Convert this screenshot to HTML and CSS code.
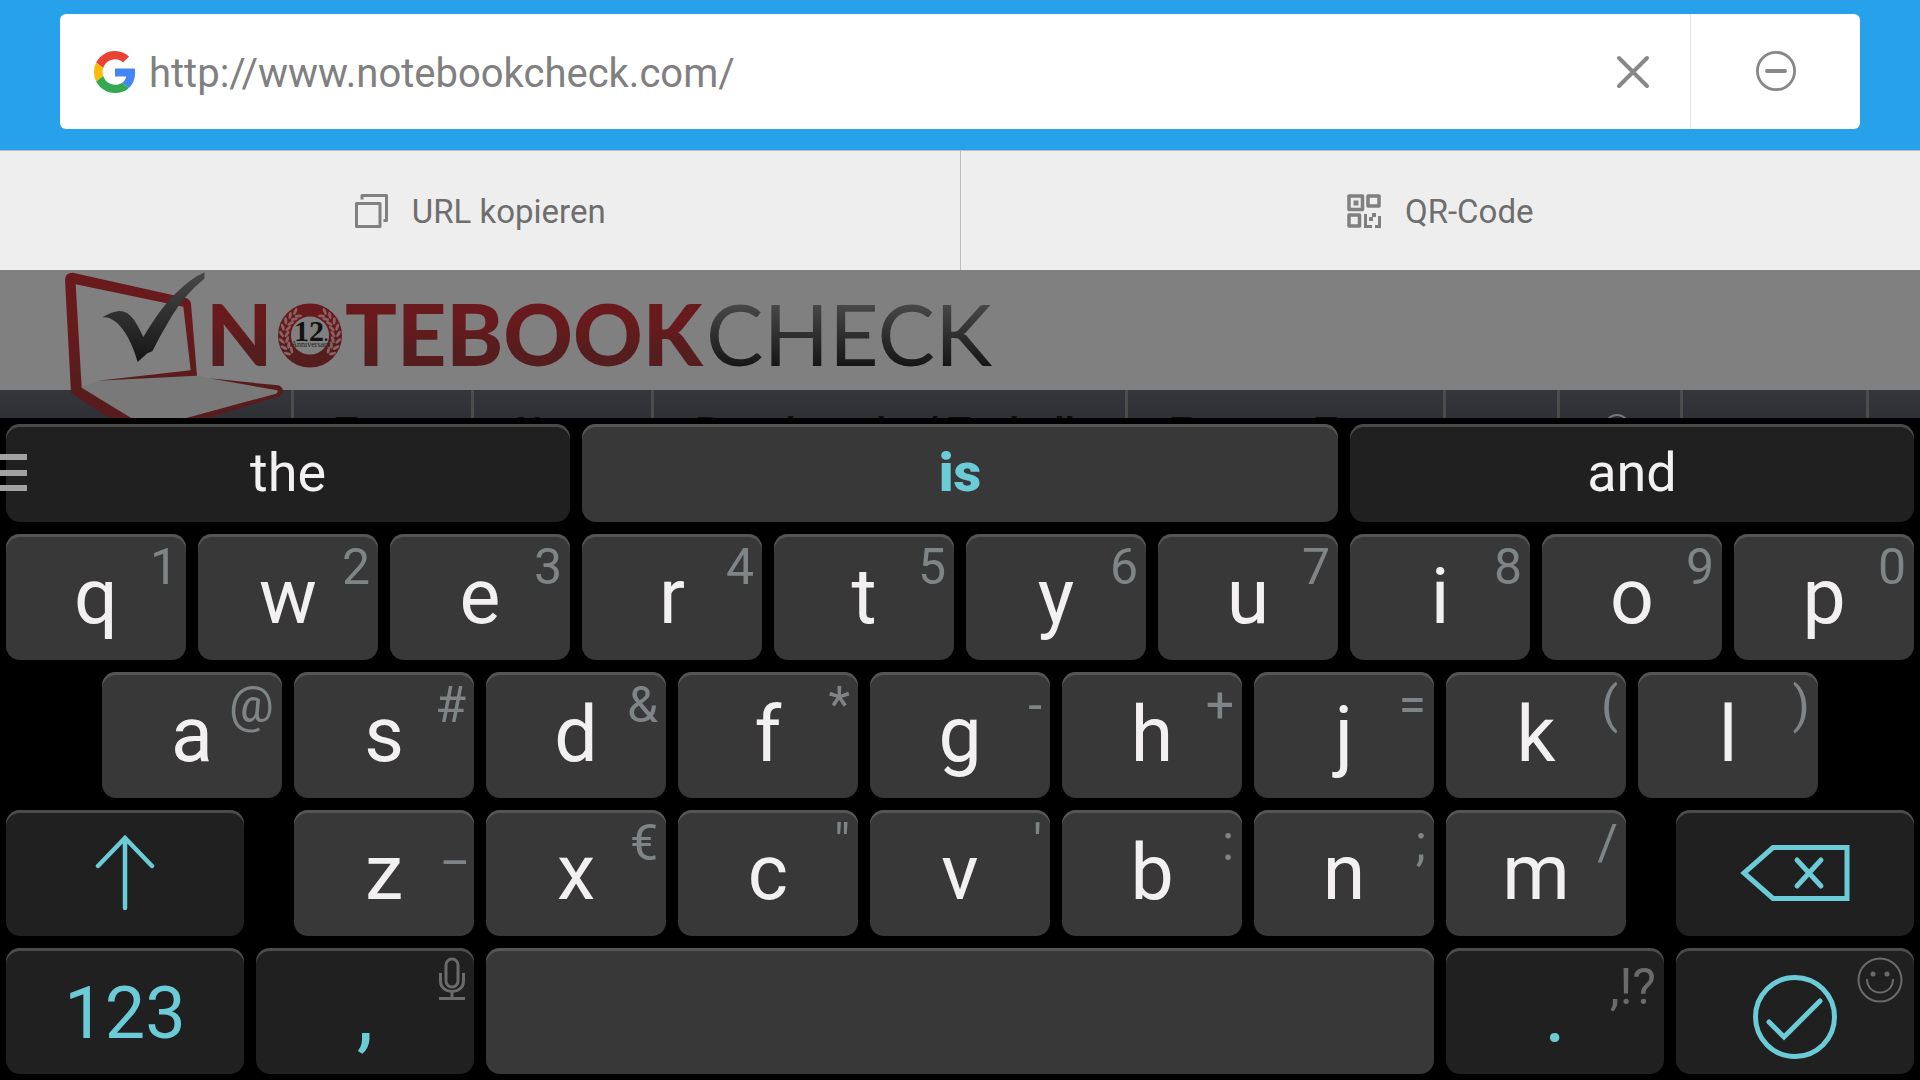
FILE: index.html
```html
<!DOCTYPE html>
<html lang="de">
<head>
<meta charset="utf-8">
<meta name="viewport" content="width=device-width, initial-scale=1">
<title>Notebookcheck</title>
<link rel="stylesheet" href="styles.css">
</head>
<body>
<header class="address">
  <form class="address-box">
    <svg class="google" viewBox="0 0 48 48" aria-hidden="true">
      <path fill="#ea4335" d="M24 9.5c3.54 0 6.71 1.22 9.21 3.6l6.85-6.85C35.9 2.38 30.47 0 24 0 14.62 0 6.51 5.38 2.56 13.22l7.98 6.19C12.43 13.72 17.74 9.5 24 9.5z"/>
      <path fill="#4285f4" d="M46.98 24.55c0-1.57-.15-3.09-.38-4.55H24v9.02h12.94c-.58 2.96-2.26 5.48-4.78 7.18l7.73 6c4.51-4.18 7.09-10.36 7.09-17.65z"/>
      <path fill="#fbbc05" d="M10.53 28.59c-.48-1.45-.76-2.99-.76-4.59s.27-3.14.76-4.59l-7.98-6.19C.92 16.46 0 20.12 0 24c0 3.88.92 7.54 2.56 10.78l7.97-6.19z"/>
      <path fill="#34a853" d="M24 48c6.48 0 11.93-2.13 15.89-5.81l-7.73-6c-2.15 1.45-4.92 2.3-8.16 2.3-6.26 0-11.57-4.22-13.47-9.91l-7.98 6.19C6.51 42.62 14.62 48 24 48z"/>
    </svg>
    <input class="url" type="text" aria-label="Adresse" value="http://www.notebookcheck.com/">
    <button class="clear" type="button" aria-label="Löschen">
      <svg width="36" height="36" viewBox="0 0 36 36"><path d="M4 4 32 32M32 4 4 32" fill="none" stroke="#888" stroke-width="4" stroke-linecap="round"/></svg>
    </button>
    <button class="stop" type="button" aria-label="Entfernen">
      <svg width="40" height="40" viewBox="0 0 40 40" fill="none" stroke="#888"><circle cx="20" cy="20" r="18.6" stroke-width="2.8"/><path d="M11 20H29" stroke-width="4" stroke-linecap="round"/></svg>
    </button>
  </form>
</header>

<div class="actions">
  <button class="action" type="button">
    <svg width="34" height="34" viewBox="0 0 34 34" fill="none" stroke="#808080" stroke-width="3" stroke-linejoin="round"><path d="M2.500 9.500H26V32.500H2.500Z"/><path d="M8 5.500V1.500H32.500V26.500H29.500"/></svg>
    <span>URL kopieren</span>
  </button>
  <button class="action" type="button">
    <svg width="34" height="34" viewBox="0 0 34 34" fill="none" stroke="#808080" stroke-width="3.500" stroke-linejoin="round"><path d="M2 2H15.500V15.500H2ZM21 2H32V12H21ZM2 21H12.500V32H2Z"/><path fill="#808080" stroke="none" d="M6.500 6.500h5v5h-5zM17 20h3v11h5v3h-8zM25 19h4v4h-3v4h-4v-4h3zM31 22h3v12h-6v-3h3z"/></svg>
    <span>QR-Code</span>
  </button>
</div>

<main class="site">
  <div class="masthead"></div>
  <nav class="menu">
    <span></span>
    <a href="#tests">Tests</a>
    <a href="#news">News</a>
    <a href="#technik">Benchmarks / Technik</a>
    <a href="#extern">Externe Tests</a>
    <span></span>
    <a class="menu-search" href="#suche" aria-label="Suche"><svg width="36" height="36" viewBox="0 0 36 36" fill="none" stroke="#77787a" stroke-width="2"><circle cx="16" cy="14" r="12"/><path d="M24 23l9 10"/></svg></a>
    <span></span>
  </nav>
  <svg class="logo" width="960" height="148" viewBox="60 270 960 148" role="img" aria-label="Notebookcheck">
    <defs>
      <linearGradient id="red" gradientUnits="userSpaceOnUse" x1="0" y1="305" x2="0" y2="367"><stop offset="0.300" stop-color="#681a1c"/><stop offset="0.750" stop-color="#551d1e"/></linearGradient>
      <linearGradient id="dark" gradientUnits="userSpaceOnUse" x1="0" y1="305" x2="0" y2="367"><stop offset="0" stop-color="#474747"/><stop offset="1" stop-color="#151515"/></linearGradient>
      <linearGradient id="shell" gradientUnits="userSpaceOnUse" x1="0" y1="20" x2="0" y2="456"><stop offset="0.400" stop-color="#681a1c"/><stop offset="0.800" stop-color="#571c1d"/></linearGradient>
      <linearGradient id="tick" gradientUnits="userSpaceOnUse" x1="0" y1="20" x2="0" y2="288"><stop offset="0" stop-color="#474747"/><stop offset="1" stop-color="#151515"/></linearGradient>
      <g id="leaves" fill="#8a6263">
        <ellipse cx="281.500" cy="334" rx="1.500" ry="3.600" transform="rotate(-32 281.500 334)"/>
        <ellipse cx="287" cy="334" rx="1.500" ry="3.600" transform="rotate(32 287 334)"/>
      </g>
      <g id="wreath">
        <use href="#leaves" transform="rotate(-42 310 336)"/>
        <use href="#leaves" transform="rotate(-28 310 336)"/>
        <use href="#leaves" transform="rotate(-14 310 336)"/>
        <use href="#leaves"/>
        <use href="#leaves" transform="rotate(14 310 336)"/>
        <use href="#leaves" transform="rotate(28 310 336)"/>
        <use href="#leaves" transform="rotate(42 310 336)"/>
        <use href="#leaves" transform="rotate(55 310 336)"/>
      </g>
    </defs>
    <g transform="translate(60 266) scale(.33333)">
      <path fill="#797979" d="M60 365 113 344 411 329 447 337 655 370 655 384 370 470 215 470Z"/>
      <path fill="url(#shell)" fill-rule="evenodd" d="M15 42Q16 20 38 20L375 95Q391 99 393 113L411 329 113 344 392 313 370 122 47 55 65 365 240 472H172L33 382Z"/>
      <path fill="url(#shell)" d="M447 337 655 358Q667 361 669 375Q668 387 655 392L390 472H320L648 383Q656 379 652 373Z"/>
      <path fill="url(#tick)" d="M127 154Q152 138 178 135Q204 135 223 163Q238 187 250 213Q302 127 341 88Q393 36 434 19L433 38Q376 83 335 151Q302 206 277 256L262 262 233 288Q207 201 168 168Q147 151 127 154Z"/>
    </g>
    <text class="word word-bold" x="206" y="366">N</text>
    <text class="word word-bold" x="345" y="366">TEBOOK</text>
    <text class="word word-thin" x="706" y="366">CHECK</text>
    <circle cx="310" cy="335.500" r="25.500" fill="none" stroke="url(#red)" stroke-width="13"/>
    <use href="#wreath"/>
    <use href="#wreath" transform="translate(620 0) scale(-1 1)"/>
    <text class="years" x="311" y="341">12<tspan class="years-dot">.</tspan></text>
    <text class="anniversary" x="311" y="347">Anniversary</text>
  </svg>
</main>

<section class="keyboard" aria-label="Tastatur">
  <div class="row suggestions">
    <button class="key dark">the</button>
    <button class="key best">is</button>
    <button class="key dark">and</button>
    <svg class="handle" width="27" height="38" viewBox="0 0 27 38" aria-hidden="true"><path fill="#a2a2a2" d="M0 0h27v6H0zM0 16h27v6H0zM0 31h27v6H0z"/></svg>
  </div>
  <div class="row top-row">
    <button class="key">q<span class="hint">1</span></button>
    <button class="key">w<span class="hint">2</span></button>
    <button class="key">e<span class="hint">3</span></button>
    <button class="key">r<span class="hint">4</span></button>
    <button class="key">t<span class="hint">5</span></button>
    <button class="key">y<span class="hint">6</span></button>
    <button class="key">u<span class="hint">7</span></button>
    <button class="key">i<span class="hint">8</span></button>
    <button class="key">o<span class="hint">9</span></button>
    <button class="key">p<span class="hint">0</span></button>
  </div>
  <div class="row home-row">
    <span></span>
    <button class="key">a<span class="hint">@</span></button>
    <button class="key">s<span class="hint">#</span></button>
    <button class="key">d<span class="hint">&amp;</span></button>
    <button class="key">f<span class="hint">*</span></button>
    <button class="key">g<span class="hint">-</span></button>
    <button class="key">h<span class="hint">+</span></button>
    <button class="key">j<span class="hint">=</span></button>
    <button class="key">k<span class="hint">(</span></button>
    <button class="key">l<span class="hint">)</span></button>
    <span></span>
  </div>
  <div class="row shift-row">
    <button class="key dark icon" aria-label="Umschalt"><svg width="60" height="76" viewBox="0 0 60 76" fill="none" stroke="#6bcbd7" stroke-width="4.500" stroke-linecap="round"><path d="M30 73V3M3 31 30 3 57 31"/></svg></button>
    <span></span>
    <button class="key">z<span class="hint">_</span></button>
    <button class="key">x<span class="hint">€</span></button>
    <button class="key">c<span class="hint">"</span></button>
    <button class="key">v<span class="hint">'</span></button>
    <button class="key">b<span class="hint">:</span></button>
    <button class="key">n<span class="hint">;</span></button>
    <button class="key">m<span class="hint">/</span></button>
    <span></span>
    <button class="key dark icon" aria-label="Rücktaste"><svg width="110" height="58" viewBox="0 0 110 58" fill="none" stroke="#6bcbd7" stroke-width="5"><path d="M33 3.500H107V54.500H33L4 29Z"/><path stroke-linecap="round" d="M57 16 81 42M81 16 57 42"/></svg></button>
  </div>
  <div class="row space-row">
    <button class="key dark accent">123</button>
    <button class="key dark accent punct">,<span class="hint-icon"><svg width="26" height="44" viewBox="0 0 26 44" fill="none" stroke="#6b6b6b" stroke-width="3"><rect x="7" y="2" width="12" height="28" rx="6"/><path d="M1.500 16V24C1.500 38 24.500 38 24.500 24V16M13 35V41M0 41.500H26"/></svg></span></button>
    <button class="key" aria-label="Leertaste"></button>
    <button class="key dark accent punct">.<span class="hint faint">,!?</span></button>
    <button class="key dark icon done" aria-label="Fertig"><svg width="84" height="84" viewBox="0 0 84 84" fill="none" stroke="#6bcbd7" stroke-width="5"><circle cx="42" cy="42" r="39.500"/><path stroke-linecap="round" d="M16 47 31 62 67 26"/></svg><span class="hint-icon"><svg width="48" height="46" viewBox="0 0 48 46" fill="none" stroke="#6b6b6b" stroke-width="2"><circle cx="23" cy="23" r="21.500"/><path d="M10 22C10 40 36 40 36 22"/><g fill="#6b6b6b" stroke="none"><circle cx="16" cy="17" r="2.500"/><circle cx="30" cy="17" r="2.500"/></g></svg></span></button>
  </div>
</section>
</body>
</html>
```
FILE: styles.css
```css
* { box-sizing: border-box; }

body {
  margin: 0;
  background: #000;
  font-family: Roboto, "Liberation Sans", sans-serif;
}

button, input {
  margin: 0;
  padding: 0;
  border: 0;
  background: none;
  font: inherit;
  color: inherit;
}

svg { display: block; }

/* address bar */
.address {
  padding: 14px 60px 21px;
  background: #28a1eb;
}
.address-box {
  display: flex;
  align-items: center;
  height: 115px;
  padding-left: 34px;
  border-radius: 6px;
  background: #fff;
}
.google { width: 42px; height: 42px; flex: none; }
.url {
  flex: 1;
  min-width: 0;
  height: 100%;
  padding: 4px 0 0 13px;
  font-size: 40px;
  color: #808080;
  outline: 0;
}
.clear {
  display: grid;
  place-items: center;
  width: 115px;
  height: 100%;
}
.stop {
  display: grid;
  place-items: center;
  width: 170px;
  height: 100%;
  padding-bottom: 2px;
  border-left: 1px solid #e4e4e4;
}

/* action strip */
.actions {
  display: flex;
  border-top: 1px solid #bdbdbd;
  background: #eee;
}
.action {
  flex: 1;
  display: flex;
  align-items: center;
  justify-content: center;
  gap: 24px;
  height: 119px;
  font-size: 33px;
  color: #6e6e6e;
}
.action span { padding-top: 2px; }
.action + .action { border-left: 1px solid #bdbdbd; }

/* dimmed page behind the keyboard */
.site {
  position: relative;
  height: 148px;
  overflow: hidden;
}
.masthead { height: 120px; background: #808080; }
.menu {
  display: grid;
  grid-template-columns: 294fr 180fr 180fr 474fr 318fr 114fr 123fr 186fr 51fr;
  height: 86px;
  background: linear-gradient(#35363b, #2b2c32 50px);
  font: bold 37px/86px "Liberation Sans", sans-serif;
}
.menu > * { min-width: 0; border-right: 3px solid #4c4c4c; }
.menu a {
  padding-left: 41px;
  color: #8c8c8c;
  text-decoration: none;
  text-shadow: 0 -2px 0 #0c0c0e;
  white-space: nowrap;
}
.menu .menu-search { padding-top: 23px; }
.logo {
  position: absolute;
  top: 0;
  left: 60px;
}
.word { font-family: Lato, sans-serif; font-size: 86px; }
.word-bold { font-weight: 900; fill: url(#red); }
.word-thin { font-weight: 400; fill: url(#dark); }
.years {
  font: bold 30px "Liberation Serif", serif;
  text-anchor: middle;
  fill: #111;
}
.years-dot { font-size: 16px; }
.anniversary {
  font: 8px "Liberation Serif", serif;
  text-anchor: middle;
  fill: #222;
}

/* keyboard */
.keyboard {
  display: grid;
  gap: 12px;
  padding: 6px;
  background: #000;
}
.row { display: grid; gap: 12px; }
.suggestions {
  position: relative;
  grid-template-columns: 564fr 756fr 564fr;
}
.top-row { grid-template-columns: repeat(10, 1fr); }
.home-row { grid-template-columns: 84fr repeat(9, 180fr) 84fr; }
.shift-row { grid-template-columns: 238fr 26fr repeat(7, 180fr) 26fr 238fr; }
.space-row { grid-template-columns: 238fr 218fr 948fr 218fr 238fr; }

.key {
  position: relative;
  min-width: 0;
  height: 126px;
  border-radius: 14px;
  background: #383838;
  box-shadow: inset 0 3px 0 #555;
  font-size: 77px;
  line-height: 88px;
  color: #f2f0f1;
}
.dark { background: #202020; box-shadow: inset 0 3px 0 #4b4b4b; }
.suggestions .key {
  height: 98px;
  font-size: 54px;
  line-height: 64px;
}
.suggestions .best { font-weight: 900; color: #6bcbd7; }
.accent { padding-top: 6px; font-size: 72px; color: #6bcbd7; }
.punct { padding-top: 6px; font-size: 84px; }
.icon { display: grid; place-items: center; }
.done { padding-top: 12px; }
.hint, .hint-icon {
  position: absolute;
  top: 3px;
  right: 8px;
  font-size: 50px;
  font-weight: 400;
  line-height: 60px;
  color: #7f8486;
}
.faint { top: 9px; color: #6b6b6b; }
.hint-icon { top: 9px; right: 9px; }
.handle {
  position: absolute;
  top: 30px;
  left: -6px;
}
```
